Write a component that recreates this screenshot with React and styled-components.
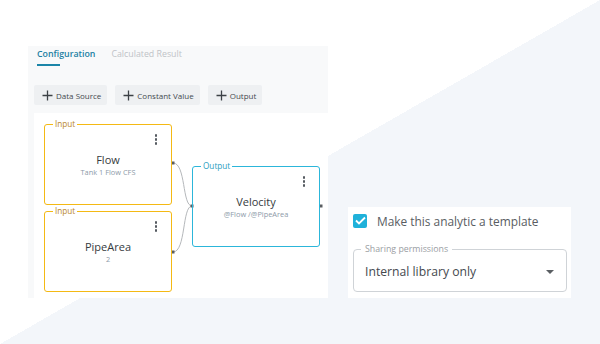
import React from "react";
import styled, { createGlobalStyle } from "styled-components";

const GlobalStyle = createGlobalStyle`
  * { box-sizing: border-box; }
  body {
    margin: 0;
    font-family: "Open Sans", "Noto Sans", sans-serif;
  }
`;

const Page = styled.div`
  width: 600px;
  height: 344px;
  display: flex;
  align-items: flex-start;
  gap: 20px;
  padding: 46px 0 0 28px;
  background: linear-gradient(to bottom right, #ffffff 50%, #f3f6fa 50%);
  overflow: hidden;
`;

const Panel = styled.div`
  width: 300px;
  height: 252px;
  background: #f8f9fa;
  display: flex;
  flex-direction: column;
`;

const Tabs = styled.div`
  display: flex;
  gap: 16px;
  padding-left: 9px;
  height: 39px;
`;

const Tab = styled.div`
  position: relative;
  height: 20px;
  padding-top: 2px;
  font-size: 8.8px;
  font-weight: ${(p) => (p.active ? 600 : 400)};
  color: ${(p) => (p.active ? "#1b7fa2" : "#bfc3c7")};

  ${(p) =>
    p.active &&
    `&::after {
      content: "";
      position: absolute;
      left: 0;
      top: 18px;
      width: 23px;
      height: 2px;
      background: #1b85a8;
    }`}
`;

const Toolbar = styled.div`
  display: flex;
  gap: 8px;
  padding-left: 6px;
  height: 28px;
`;

const AddButton = styled.div`
  display: flex;
  align-items: center;
  gap: 3px;
  height: 20px;
  padding: 0 6px 0 8px;
  background: #eef0f2;
  border-radius: 2px;
  font-size: 8px;
  font-weight: 500;
  color: #454a4f;
`;

const Canvas = styled.div`
  position: relative;
  margin-left: 6px;
  flex: 1;
  background: #ffffff;
`;

const Wires = styled.svg`
  position: absolute;
  left: 0;
  top: 0;
`;

const Node = styled.div`
  position: absolute;
  width: 128px;
  height: 81px;
  border: 1.5px solid ${(p) => (p.output ? "#2cb6da" : "#f4b914")};
  border-radius: 3px;
  display: flex;
  flex-direction: column;
  align-items: center;
  justify-content: center;
  padding-top: 1px;
`;

const NodeLabel = styled.span`
  position: absolute;
  top: -7px;
  left: 8px;
  padding: 0 2px;
  background: #ffffff;
  font-size: 8.2px;
  line-height: 11px;
  color: ${(p) => (p.output ? "#2a9ec0" : "#b8862a")};
`;

const Kebab = styled.div`
  position: absolute;
  top: 9px;
  right: 14px;
  display: flex;
  flex-direction: column;
  gap: 1.5px;

  span {
    width: 2.5px;
    height: 2.5px;
    border-radius: 50%;
    background: #555a60;
  }
`;

const NodeTitle = styled.div`
  font-size: 11px;
  color: #363b40;
  line-height: 15px;
`;

const NodeSub = styled.div`
  font-size: 7.4px;
  color: #8d9aa8;
  line-height: 11px;
`;

const Side = styled.div`
  margin-top: 161px;
  width: 223px;
  height: 91px;
  background: #ffffff;
  padding: 6px 5px 0 5px;
  display: flex;
  flex-direction: column;
`;

const CheckRow = styled.div`
  display: flex;
  align-items: center;
  gap: 10px;
  height: 15px;
  font-size: 11.9px;
  color: #595d62;
`;

const CheckBox = styled.div`
  width: 14px;
  height: 14px;
  border-radius: 2px;
  background: #1fb1da;
  display: flex;
  align-items: center;
  justify-content: center;
`;

const Select = styled.div`
  position: relative;
  margin-top: 21px;
  height: 43px;
  width: 214px;
  border: 1px solid #cfd3d7;
  border-radius: 4px;
  display: flex;
  align-items: center;
  justify-content: space-between;
  padding: 2px 12px 0 11px;
  font-size: 12.2px;
  color: #45494e;
`;

const SelectLabel = styled.span`
  position: absolute;
  top: -7px;
  left: 7px;
  padding: 0 4px;
  background: #ffffff;
  font-size: 8.8px;
  line-height: 12px;
  color: #9a9ea3;
`;

const Caret = styled.span`
  width: 0;
  height: 0;
  border-left: 4px solid transparent;
  border-right: 4px solid transparent;
  border-top: 4px solid #5a5e63;
`;

function Plus() {
  return (
    <svg width="11" height="11" viewBox="0 0 11 11">
      <path d="M5.5 0.5v10M0.5 5.5h10" stroke="#3c4146" strokeWidth="1.3" />
    </svg>
  );
}

function DotsMenu() {
  return (
    <Kebab>
      <span />
      <span />
      <span />
    </Kebab>
  );
}

const nodes = [
  { id: "flow", left: 10, top: 11, label: "Input", title: "Flow", sub: "Tank 1 Flow CFS" },
  { id: "pipe", left: 10, top: 98, label: "Input", title: "PipeArea", sub: "2" },
  { id: "vel", left: 158, top: 53, label: "Output", title: "Velocity", sub: "@Flow /@PipeArea", output: true },
];

export default function App() {
  return (
    <>
      <GlobalStyle />
      <Page>
        <Panel>
          <Tabs>
            <Tab active>Configuration</Tab>
            <Tab>Calculated Result</Tab>
          </Tabs>
          <Toolbar>
            <AddButton>
              <Plus />
              Data Source
            </AddButton>
            <AddButton>
              <Plus />
              Constant Value
            </AddButton>
            <AddButton>
              <Plus />
              Output
            </AddButton>
          </Toolbar>
          <Canvas>
            <Wires width="294" height="185">
              <path
                d="M139 50 C152 50 148 93 158 93 M139 139 C152 139 148 93 158 93"
                fill="none"
                stroke="#b5b8bb"
                strokeWidth="1"
              />
              <rect x="137.5" y="48.5" width="3" height="3" fill="#5a5e62" />
              <rect x="137.5" y="137.5" width="3" height="3" fill="#5a5e62" />
              <rect x="156.5" y="91.5" width="3" height="3" fill="#5a5e62" />
              <rect x="285.5" y="91.5" width="3" height="3" fill="#5a5e62" />
            </Wires>
            {nodes.map((n) => (
              <Node key={n.id} output={n.output} style={{ left: n.left, top: n.top }}>
                <NodeLabel output={n.output}>{n.label}</NodeLabel>
                <DotsMenu />
                <NodeTitle>{n.title}</NodeTitle>
                <NodeSub>{n.sub}</NodeSub>
              </Node>
            ))}
          </Canvas>
        </Panel>
        <Side>
          <CheckRow>
            <CheckBox>
              <svg width="11" height="9" viewBox="0 0 11 9">
                <path d="M1 4.5l3 3 6-6" fill="none" stroke="#fff" strokeWidth="1.8" />
              </svg>
            </CheckBox>
            Make this analytic a template
          </CheckRow>
          <Select>
            <SelectLabel>Sharing permissions</SelectLabel>
            Internal library only
            <Caret />
          </Select>
        </Side>
      </Page>
    </>
  );
}
